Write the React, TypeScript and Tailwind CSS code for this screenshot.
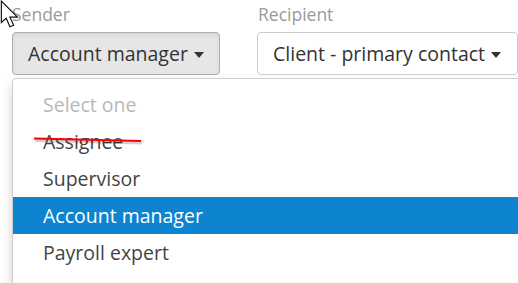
import React from "react";

// ── Data ───────────────────────────────────────────────────────────────
const OPTIONS: { label: string; kind: "placeholder" | "struck" | "normal" | "active" }[] = [
  { label: "Select one", kind: "placeholder" },
  { label: "Assignee", kind: "struck" },
  { label: "Supervisor", kind: "normal" },
  { label: "Account manager", kind: "active" },
  { label: "Payroll expert", kind: "normal" },
];

const ROW: Record<string, string> = {
  placeholder: "text-[#b8b8b8]",
  struck: "text-[#444] relative",
  normal: "text-[#444]",
  active: "bg-[#0d84d0] text-white",
};

function Caret() {
  return (
    <svg width="10" height="6" viewBox="0 0 10 6" className="ml-[6px] mt-[2px] shrink-0">
      <path d="M0 0 L10 0 L5 6 Z" fill="#333" />
    </svg>
  );
}

function Cursor() {
  return (
    <svg width="22" height="30" viewBox="0 0 20 28" className="absolute left-0 top-0">
      <path
        d="M1 1 L1 21 L5.5 17 L9 25 L12.5 23.5 L9 16 L16 16 Z"
        fill="#fff"
        stroke="#111"
        strokeWidth="1.1"
        strokeLinejoin="miter"
      />
    </svg>
  );
}

// ── App ────────────────────────────────────────────────────────────────
export default function App() {
  return (
    <div
      className="relative w-[518px] h-[283px] overflow-hidden bg-white"
      style={{ fontFamily: '"Open Sans", sans-serif' }}
    >
      <div className="flex pl-[12px] gap-[37px]">
        <div className="w-[208px]">
          <div className="h-[32px] text-[17.5px] leading-[28px] text-[#9a9a9a]">Sender</div>
          <div className="h-[43px] flex items-center pl-[15px] rounded-[4px] border border-[#adadad] bg-[#e6e6e6] text-[19.5px] text-[#333] shadow-[inset_0_2px_4px_rgba(0,0,0,0.08)]">
            Account manager
            <Caret />
          </div>
        </div>
        <div className="w-[261px]">
          <div className="h-[32px] text-[17.5px] leading-[28px] text-[#9a9a9a] pl-[1px]">Recipient</div>
          <div className="h-[43px] flex items-center pl-[15px] rounded-[4px] border border-[#ccc] bg-white text-[19.5px] text-[#333]">
            Client - primary contact
            <Caret />
          </div>
        </div>
      </div>

      <div className="ml-[12px] mt-[3px] w-[540px] pt-[7px] pb-[20px] bg-white border border-[#cfcfcf] rounded-tl-[4px] shadow-[0_6px_12px_rgba(0,0,0,0.175)] text-[19.5px]">
        {OPTIONS.map((o) => (
          <div key={o.label} className={`h-[37px] flex items-center pl-[30px] ${ROW[o.kind]}`}>
            {o.label}
            {o.kind === "struck" && (
              <svg width="115" height="8" viewBox="0 0 115 8" className="absolute left-[20px] top-[14px]">
                <path d="M1 2 Q50 3 108 4.5" stroke="rgba(0,0,0,0.18)" strokeWidth="3" fill="none" transform="translate(1,1.5)" />
                <path d="M1 1.5 Q50 2.5 108 4" stroke="#f00" strokeWidth="2" fill="none" />
              </svg>
            )}
          </div>
        ))}
      </div>

      <Cursor />
    </div>
  );
}
